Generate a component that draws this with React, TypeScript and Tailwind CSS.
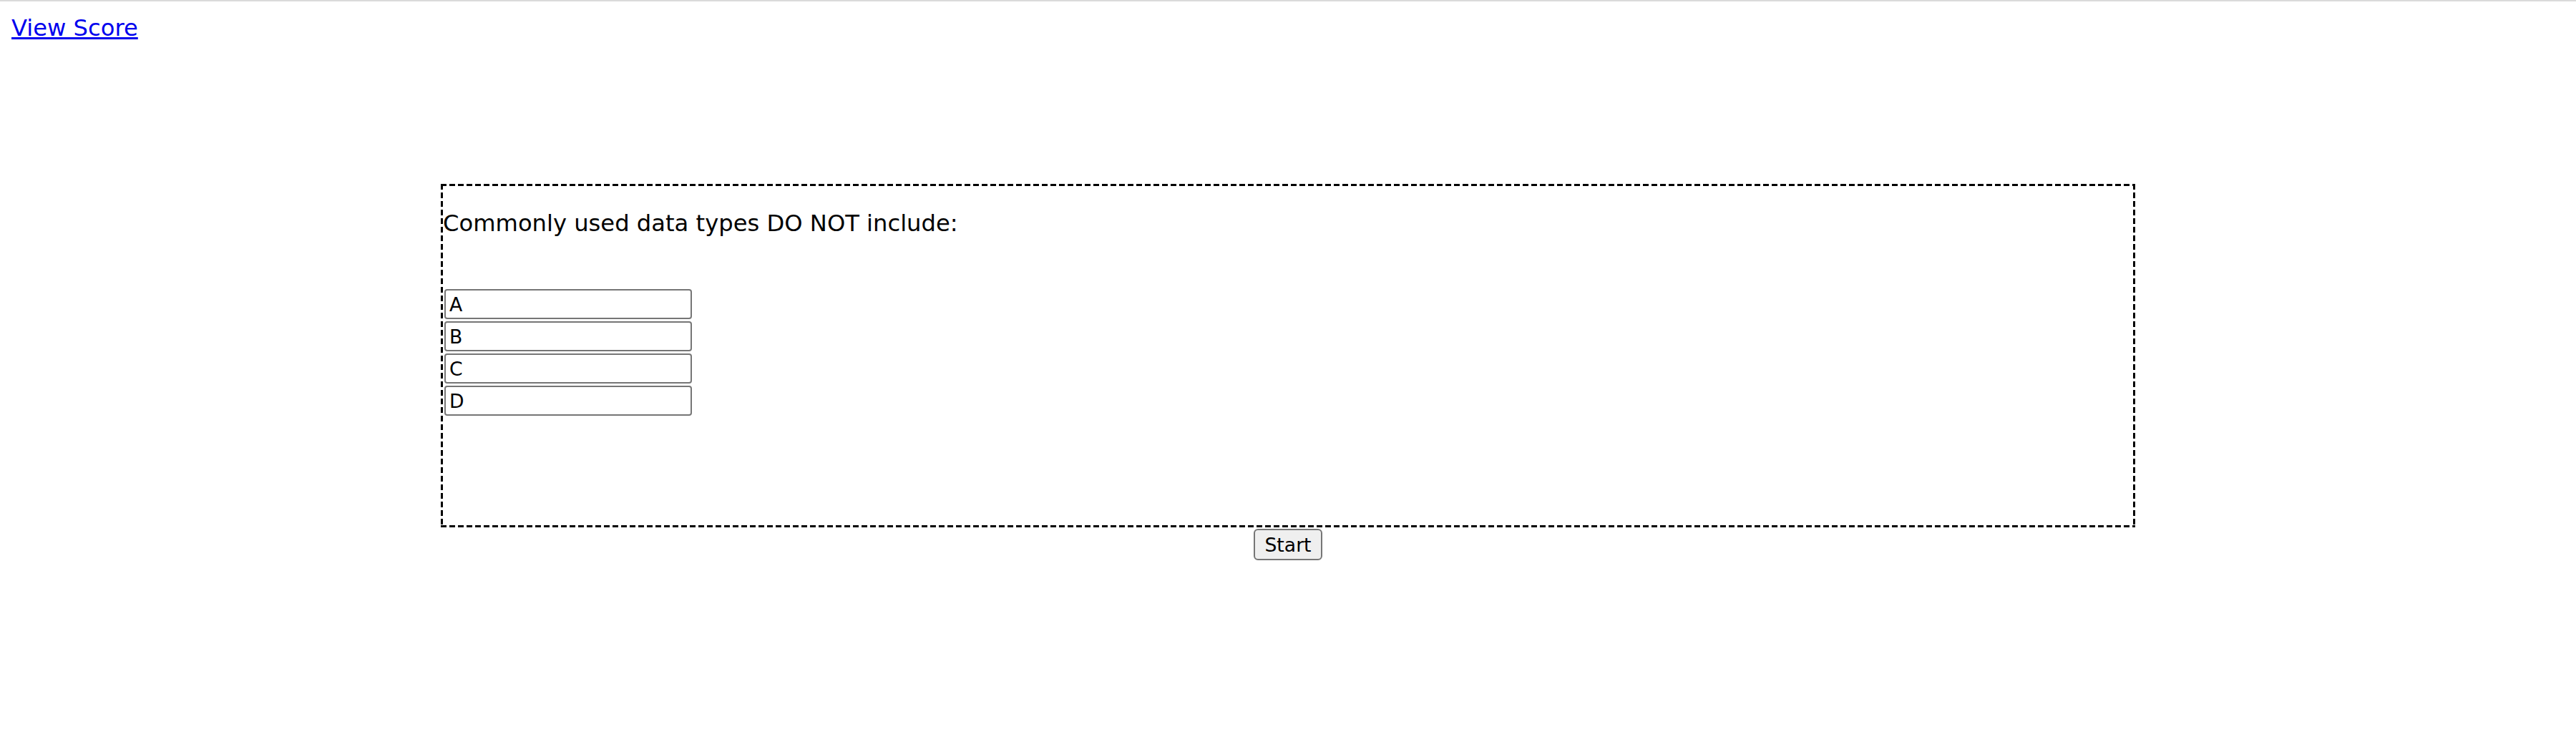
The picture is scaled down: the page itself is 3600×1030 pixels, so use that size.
const options = ["A", "B", "C", "D"];

function OptionButton({ label }: { label: string }) {
  return (
    <button
      type="button"
      className="flex h-[42px] w-[346px] items-center rounded-[4px] border-2 border-[#767676] bg-white pl-[5px] pt-[3px] text-left text-[26.67px] leading-none text-black"
    >
      {label}
    </button>
  );
}

export default function App() {
  return (
    <div className="min-h-screen border-t-2 border-[#dadada] bg-white font-['DejaVu_Sans',sans-serif] text-black">
      <header className="pl-[16px] pt-[19px]">
        <a href="#" className="text-[32.2px] leading-[37px] text-[#0000ee] underline">
          View Score
        </a>
      </header>

      <main className="mt-[199px] flex flex-col items-center">
        {/* dashed frame drawn with gradients to get the longer dash of the original */}
        <section className="h-[480px] w-[2368px] p-[3px] [background:repeating-linear-gradient(90deg,#000_0_8px,transparent_8px_12px)_top_left/100%_3px_no-repeat,repeating-linear-gradient(90deg,#000_0_8px,transparent_8px_12px)_bottom_left/100%_3px_no-repeat,repeating-linear-gradient(180deg,#000_0_8px,transparent_8px_12px)_top_left/3px_100%_no-repeat,repeating-linear-gradient(180deg,#000_0_8px,transparent_8px_12px)_top_right/3px_100%_no-repeat]">
          <p className="mt-[34px] text-[32.2px] leading-[37px]">
            Commonly used data types DO NOT include:
          </p>
          <div className="ml-[2px] mt-[73px] flex flex-col items-start gap-[3px]">
            {options.map((label) => (
              <OptionButton key={label} label={label} />
            ))}
          </div>
        </section>

        <button
          type="button"
          className="mt-[2px] flex h-[44px] w-[96px] items-center justify-center rounded-[6px] border-2 border-[#767676] bg-[#efefef] pt-[3px] text-[26.67px] leading-none text-black"
        >
          Start
        </button>
      </main>
    </div>
  );
}
